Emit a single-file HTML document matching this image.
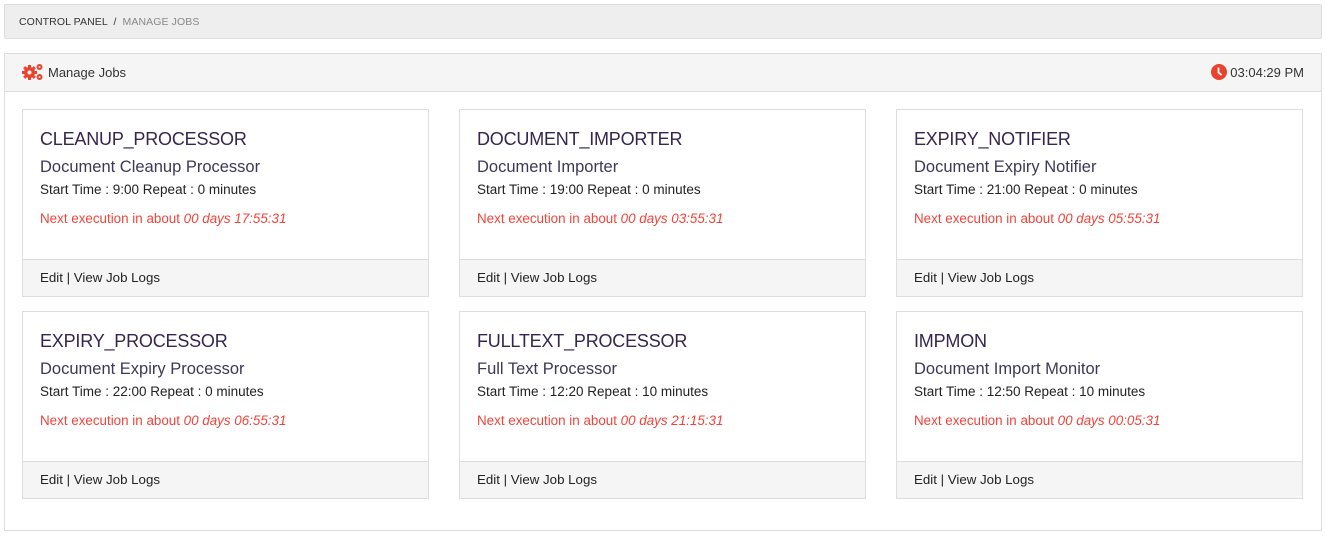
<!DOCTYPE html>
<html><head><style>
*{box-sizing:border-box;margin:0;padding:0}
body{width:1325px;height:539px;background:#fff;font-family:"Liberation Sans",sans-serif;color:#333;position:relative;overflow:hidden}
.bc{position:absolute;left:4px;top:4px;width:1318px;height:35px;background:#eee;border:1px solid #ddd;border-radius:2px;font-size:10.5px;line-height:34px;padding-left:14px;color:#333;letter-spacing:.1px}
.bc span{color:#888}
.panel{position:absolute;left:4px;top:53px;width:1318px;height:478px;border:1px solid #ddd}
.ph{height:38px;background:#f5f5f5;border-bottom:1px solid #ddd;font-size:13px;line-height:37px;padding-left:17px;position:relative}
.ph svg{vertical-align:-4px;margin-right:4px}
.clock{position:absolute;right:17px;top:0}
.card{position:absolute;width:407px;height:188px;border:1px solid #ddd}
.card .b{padding:15px 17px 0}
.t{font-size:18px;color:#35254f;line-height:28px;letter-spacing:-.2px}
.s{font-size:16.5px;color:#3e3856;line-height:26px;margin-top:1px}
.st{font-size:13.5px;color:#222;line-height:20px;margin-top:0}
.n{font-size:13.4px;color:#f0433a;margin-top:11px}
.f{position:absolute;left:0;right:0;bottom:0;height:37px;background:#f5f5f5;border-top:1px solid #ddd;font-size:13.3px;line-height:35px;padding-left:17px;color:#222}
</style></head><body>
<div class="bc">CONTROL PANEL &nbsp;/&nbsp; <span>MANAGE JOBS</span></div>
<div class="panel">
<div class="ph"><svg width="22" height="18" viewBox="0 0 22 18"><g fill="#e8432f"><circle cx="7.5" cy="9.5" r="5.5"/><g stroke="#e8432f" stroke-width="3"><line x1="7.5" y1="2" x2="7.5" y2="17"/><line x1="0" y1="9.5" x2="15" y2="9.5"/><line x1="2.2" y1="4.2" x2="12.8" y2="14.8"/><line x1="12.8" y1="4.2" x2="2.2" y2="14.8"/></g><circle cx="17.5" cy="4" r="3"/><circle cx="17.5" cy="14" r="3"/></g><circle cx="7.5" cy="9.5" r="2" fill="#f5f5f5"/><circle cx="17.5" cy="4" r="1" fill="#f5f5f5"/><circle cx="17.5" cy="14" r="1" fill="#f5f5f5"/></svg>Manage Jobs
<span class="clock"><svg width="16" height="16" viewBox="0 0 16 16" style="margin-right:3px;vertical-align:-3px"><circle cx="8" cy="8" r="8" fill="#e8432f"/><path d="M7.5 3.5V8.5L10.5 11" stroke="#fff" stroke-width="1.8" fill="none"/></svg>03:04:29 PM</span></div>
</div>
<div class="card" style="left:22px;top:109px"><div class="b"><div class="t">CLEANUP_PROCESSOR</div><div class="s">Document Cleanup Processor</div><div class="st">Start Time : 9:00 Repeat : 0 minutes</div><div class="n">Next execution in about <i>00 days 17:55:31</i></div></div><div class="f">Edit | View Job Logs</div></div>
<div class="card" style="left:459px;top:109px"><div class="b"><div class="t">DOCUMENT_IMPORTER</div><div class="s">Document Importer</div><div class="st">Start Time : 19:00 Repeat : 0 minutes</div><div class="n">Next execution in about <i>00 days 03:55:31</i></div></div><div class="f">Edit | View Job Logs</div></div>
<div class="card" style="left:896px;top:109px"><div class="b"><div class="t">EXPIRY_NOTIFIER</div><div class="s">Document Expiry Notifier</div><div class="st">Start Time : 21:00 Repeat : 0 minutes</div><div class="n">Next execution in about <i>00 days 05:55:31</i></div></div><div class="f">Edit | View Job Logs</div></div>
<div class="card" style="left:22px;top:311px"><div class="b"><div class="t">EXPIRY_PROCESSOR</div><div class="s">Document Expiry Processor</div><div class="st">Start Time : 22:00 Repeat : 0 minutes</div><div class="n">Next execution in about <i>00 days 06:55:31</i></div></div><div class="f">Edit | View Job Logs</div></div>
<div class="card" style="left:459px;top:311px"><div class="b"><div class="t">FULLTEXT_PROCESSOR</div><div class="s">Full Text Processor</div><div class="st">Start Time : 12:20 Repeat : 10 minutes</div><div class="n">Next execution in about <i>00 days 21:15:31</i></div></div><div class="f">Edit | View Job Logs</div></div>
<div class="card" style="left:896px;top:311px"><div class="b"><div class="t">IMPMON</div><div class="s">Document Import Monitor</div><div class="st">Start Time : 12:50 Repeat : 10 minutes</div><div class="n">Next execution in about <i>00 days 00:05:31</i></div></div><div class="f">Edit | View Job Logs</div></div>
</body></html>
